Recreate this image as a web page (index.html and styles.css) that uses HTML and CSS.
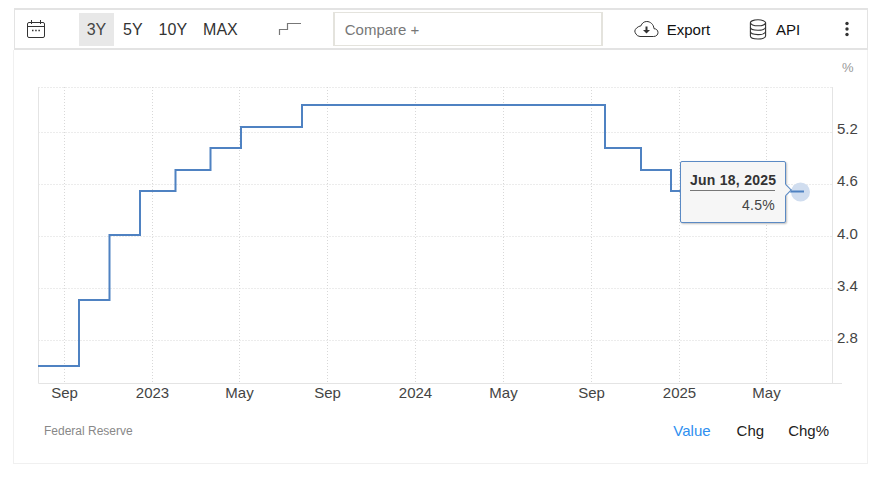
FILE: index.html
```html
<!DOCTYPE html>
<html lang="en">
<head>
<meta charset="utf-8">
<title>Federal Reserve interest rate chart</title>
<link rel="stylesheet" href="styles.css">
</head>
<body>
<div class="widget">
  <div class="toolbar">
    <svg class="icon-cal" width="20" height="22" viewBox="0 0 20 22" fill="none" stroke="#333" stroke-width="1">
      <rect x="1.5" y="4.5" width="17" height="15" rx="1.5"/>
      <path d="M1.5 8.5H18.5M5.500 2V6M14.5 2V6"/>
      <path d="M6 12.5H7.5M9.2 12.5H10.7M12.4 12.5H13.9" stroke-width="1.6"/>
    </svg>
    <div class="ranges">
      <span class="range active">3Y</span>
      <span class="range r5">5Y</span>
      <span class="range r10">10Y</span>
      <span class="range rmax">MAX</span>
    </div>
    <svg class="icon-step" width="24" height="16" viewBox="0 0 24 16" fill="none" stroke="#777" stroke-width="1.2">
      <path d="M1.5 14V8.5H9.5V2.5H23"/>
    </svg>
    <div class="compare">Compare +</div>
    <div class="action export">
      <svg width="25" height="18" viewBox="0 0 25 18" fill="none" stroke="#333" stroke-width="1">
        <path d="M6 16.5H19.5C22.5 16.5 24 14.5 24 12.5C24 10.2 22 8.6 20 8.7C19.6 4 16 1.5 12.8 1.5C10 1.5 7.8 3.2 7 5.8C3.8 6.3 1 9 .8 11C.6 12 2.5 16.5 6 16.5Z"/>
        <path d="M12.5 6.5V11" stroke-width="2"/>
        <path d="M9 10H16L12.5 13.5Z" fill="#333" stroke="none"/>
      </svg>
      <span>Export</span>
    </div>
    <div class="action api">
      <svg width="18" height="21" viewBox="0 0 18 21" fill="none" stroke="#333" stroke-width="1.1">
        <ellipse cx="9" cy="3.8" rx="7.6" ry="3"/>
        <path d="M1.4 3.8V17C1.4 18.8 5 20 9 20S16.6 18.8 16.6 17V3.8"/>
        <path d="M1.4 8.2C1.4 10 5 11.2 9 11.2S16.6 10 16.6 8.2"/>
        <path d="M1.4 12.6C1.4 14.4 5 15.6 9 15.6S16.6 14.4 16.6 12.6"/>
      </svg>
      <span>API</span>
    </div>
    <svg class="icon-more" width="4" height="16" viewBox="0 0 4 16" fill="#333">
      <circle cx="2" cy="2.5" r="1.7"/>
      <circle cx="2" cy="8" r="1.7"/>
      <circle cx="2" cy="13.5" r="1.7"/>
    </svg>
  </div>
  <div class="card">
    <div class="chart">
      <svg class="plot" width="855" height="364" viewBox="13 50 855 364">
        <g class="grid">
          <path d="M38.5 87.5H832.5M38.5 132.5H832.5M38.5 184.5H832.5M38.5 236.5H832.5M38.5 288.5H832.5M38.5 340.5H832.5"/>
          <path d="M64.5 87V383M152.5 87V383M239.5 87V383M327.5 87V383M415.5 87V383M503.5 87V383M591.5 87V383M679.5 87V383M766.5 87V383"/>
        </g>
        <path class="axis" d="M38.5 87V383.5H842M832.5 87V383.5"/>
        <path class="line" d="M38 366H79V300H109.500V235H140V191H175.500V170H210.500V148H241V127H302V105H605V148H641V170H671V191H800"/>
        <circle class="marker" cx="800.500" cy="192" r="9.500"/>
        <path class="line" d="M790 191.500H804"/>
        <g class="ylabels">
          <text x="837" y="134">5.2</text>
          <text x="837" y="186">4.6</text>
          <text x="837" y="239">4.0</text>
          <text x="837" y="291">3.4</text>
          <text x="837" y="343">2.8</text>
        </g>
        <g class="xlabels">
          <text x="64.500" y="398">Sep</text>
          <text x="152.500" y="398">2023</text>
          <text x="239.500" y="398">May</text>
          <text x="327.500" y="398">Sep</text>
          <text x="415.500" y="398">2024</text>
          <text x="503.500" y="398">May</text>
          <text x="591.500" y="398">Sep</text>
          <text x="679.500" y="398">2025</text>
          <text x="766.500" y="398">May</text>
        </g>
        <text class="unit" x="842" y="72">%</text>
      </svg>
      <div class="tooltip">
        <div class="tip-date">Jun 18, 2025</div>
        <div class="tip-value">4.5%</div>
        <span class="tip-arrow"></span>
      </div>
    </div>
    <div class="footer">
      <span class="source">Federal Reserve</span>
      <div class="modes">
        <span class="mode on">Value</span>
        <span class="mode">Chg</span>
        <span class="mode">Chg%</span>
      </div>
    </div>
  </div>
</div>
</body>
</html>
```
FILE: styles.css
```css
* { box-sizing: border-box; }
html, body { margin: 0; background: #fff; }
body { font-family: "Liberation Sans", Arial, sans-serif; color: #333; }
.widget { width: 855px; margin: 8px 0 0 13px; }
.toolbar {
  display: flex;
  align-items: center;
  height: 42px;
  margin-left: 1px;
  border: 1px solid #e3e3e3;
  border-width: 2px 1px 2px 1px;
  font-size: 15px;
}
.icon-cal { margin-left: 11px; flex: none; }
.ranges { display: flex; align-items: center; margin-left: 33px; height: 33px; font-size: 16px; }
.range { display: flex; align-items: center; justify-content: center; height: 33px; padding: 1px 8px 0; color: #333; }
.range.active { background: #e8e8e8; color: #444; width: 35px; padding: 1px 0 0; }
.range.r5 { padding: 1px 8px 0 9px; }
.icon-step { margin-left: 32px; flex: none; }
.compare {
  display: flex;
  align-items: center;
  width: 270px;
  height: 34px;
  margin-left: 31px;
  padding-left: 10px;
  border: 1px solid #e4e3dd;
  border-width: 1px 2px 1px 2px;
  color: #777;
}
.action { display: flex; align-items: center; color: #111; }
.export { gap: 8px; margin-left: 31px; }
.api { gap: 9px; margin-left: 39px; }
.icon-more { margin-left: 45px; flex: none; }
.card {
  height: 414px;
  border: 1px solid #f0f0f0;
  border-top: 0;
}
.chart { position: relative; height: 364px; margin-left: -1px; }
.plot { display: block; }
.grid path { fill: none; stroke: #d8d8d8; stroke-width: 1; stroke-dasharray: 1 2; }
.axis { fill: none; stroke: #e4e4e4; stroke-width: 1; }
.line { fill: none; stroke: #4f82c2; stroke-width: 2; }
.marker { fill: #d0ddef; }
.ylabels text { font-size: 15px; fill: #444; }
.xlabels text { font-size: 15px; fill: #444; text-anchor: middle; }
.unit { font-size: 13px; fill: #999; }
.tooltip {
  position: absolute;
  left: 667px;
  top: 111px;
  width: 106px;
  height: 62px;
  padding: 9px 10px 0 9px;
  background: #f6f6f6;
  border: 1px solid #5b8ac4;
  border-radius: 2px;
  box-shadow: 1px 1px 2px rgba(0, 0, 0, .25);
  text-align: right;
}
.tip-date {
  font-size: 14px;
  font-weight: 700;
  letter-spacing: .25px;
  line-height: 18px;
  color: #333;
  padding-bottom: 1px;
  border-bottom: 1px solid #777;
  white-space: nowrap;
}
.tip-value { font-size: 14px; line-height: 18px; margin-top: 5px; color: #444; letter-spacing: .3px; }
.tip-arrow {
  position: absolute;
  right: -5px;
  top: 24px;
  width: 8px;
  height: 8px;
  transform: rotate(45deg) scale(1.05);
  background: #f6f6f6;
  border: 1px solid #5b8ac4;
  border-width: 1px 1px 0 0;
}
.footer {
  display: flex;
  justify-content: space-between;
  align-items: center;
  padding: 8px 38px 0 30px;
}
.source { font-size: 12px; color: #888; }
.modes { display: flex; gap: 25px; font-size: 15px; color: #222; }
.mode.on { color: #2e8ff0; }
.mode:nth-child(2) { margin-left: 1px; margin-right: -1px; }
```
